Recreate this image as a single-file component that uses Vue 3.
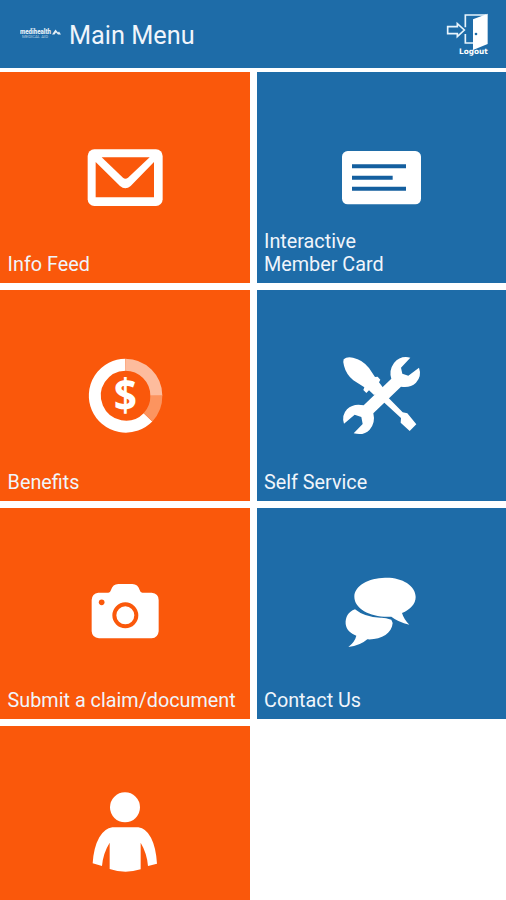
<template>
    <div class="screen">
        <header class="header">
            <svg class="logo" viewBox="0 0 42 14">
                <text class="logo-name" x="0" y="7" textLength="31" lengthAdjust="spacingAndGlyphs">medihealth</text>
                <text class="logo-sub" x="2" y="11.2" textLength="26" lengthAdjust="spacingAndGlyphs">MEDICAL AID</text>
                <path class="logo-mark" d="M32 7.5 L35.5 2.5 L38 5.5 L39 4.5 L41 7.5 H38 L36 5.5 L34.5 7.5 Z" />
            </svg>
            <h1>Main Menu</h1>
            <button class="logout" aria-label="Logout">
                <svg viewBox="45 30 132 138">
                    <path class="outline" d="M53 77 H82 V68 L103 87 L82 107 V98 H53 Z" />
                    <path class="outline" d="M106 79 V42 H168 M106 99 V126 H130" />
                    <path class="white" d="M129 55 L173 38 V129 L129 147 Z" />
                    <circle class="knob" cx="138" cy="99" r="4" />
                    <text class="logout-text" x="87" y="160" textLength="86" lengthAdjust="spacingAndGlyphs">Logout</text>
                </svg>
            </button>
        </header>

        <main class="menu">
            <button v-for="item in items" :key="item.id" class="tile" :class="item.color">
                <svg class="icon" :viewBox="item.box">
                    <g v-if="item.id === 'feed'">
                        <rect class="white" x="38" y="43" width="225" height="170" rx="20" />
                        <path class="hole" d="M80 67 H224 L159 128 Q151 134 144 128 Z" />
                        <path class="hole" d="M62 81 L135 153 Q151 167 167 153 L237 81 V187 H62 Z" />
                    </g>
                    <g v-else-if="item.id === 'card'">
                        <rect class="white" x="36" y="48" width="237" height="160" rx="17" />
                        <path class="card-lines" d="M66 94 H228 M66 128 H188 M66 161 H228" />
                    </g>
                    <g v-else-if="item.id === 'benefits'">
                        <path class="ring" d="M219 217 A93 93 0 1 1 151 59" />
                        <path class="ring soft" d="M151 59 A93 93 0 0 1 244 152" />
                        <path class="ring softer" d="M244 152 A93 93 0 0 1 219 217" />
                        <text class="dollar" x="151" y="183" text-anchor="middle">$</text>
                    </g>
                    <g v-else-if="item.id === 'service'">
                        <path class="white" d="M41 43 Q50 34 69 38 Q98 44 117 69 L135 96 L143 95 L151 104 L147 112 L166 137 L132 150 L117 136 L109 144 L100 135 L103 127 L70 106 Q48 87 42 62 Q38 51 41 43 Z" />
                        <path class="white" d="M155 166 L170 153 L218 202 L232 205 L259 238 L239 258 L212 233 L213 219 Z" />
                        <path class="white" d="M241 38 L213 68 L217 86 L235 92 L267 68 Q276 93 258 113 Q240 130 213 125 L130 205 Q137 234 119 254 Q101 273 71 265 L98 237 L94 216 L74 209 L42 236 Q34 211 51 193 Q70 174 101 181 L184 101 Q176 76 192 54 Q211 31 241 38 Z" />
                    </g>
                    <g v-else-if="item.id === 'claim'">
                        <path class="white" d="M70 68 H100 Q106 68 108 60 Q113 42 130 42 H172 Q189 42 194 60 Q196 68 202 68 H230 Q251 70 251 90 V184 Q249 204 230 205 H72 Q51 203 50 184 V90 Q51 70 70 68 Z" />
                        <circle class="lens" cx="151" cy="136" r="33" />
                        <circle class="hole" cx="80" cy="97" r="8.5" />
                    </g>
                    <g v-else-if="item.id === 'contact'">
                        <path class="white" d="M75 133 C54 140 46 158 47 177 C49 194 62 206 79 212 Q75 230 55 246 Q91 242 112 223 C153 225 186 205 188 174 L184 164 Q165 157 151 158 Q104 157 75 133 Z" />
                        <path class="white" d="M165 38 C213 36 257 60 257 96 C257 117 241 134 216 144 Q222 164 238 179 Q204 171 184 155 C125 159 73 132 73 95 C73 62 116 39 165 38 Z" />
                    </g>
                    <g v-else>
                        <circle class="white" cx="150" cy="82" r="45" />
                        <path class="white" d="M112 142 H190 Q213 145 228 173 Q243 202 246 251 L219 258 Q216 220 197 188 V268 Q150 283 104 267 V188 Q84 220 81 258 L53 250 Q56 202 73 172 Q89 145 112 142 Z" />
                    </g>
                </svg>
                <span class="label">{{ item.label }}</span>
            </button>
        </main>
    </div>
</template>

<script setup>
const items = [
    { id: 'feed', label: 'Info Feed', color: 'orange', box: '0 -18 300 300' },
    { id: 'card', label: 'Interactive\nMember Card', color: 'blue', box: '6 -18 300 300' },
    { id: 'benefits', label: 'Benefits', color: 'orange', box: '0 6 300 300' },
    { id: 'service', label: 'Self Service', color: 'blue', box: '6 6 300 300' },
    { id: 'claim', label: 'Submit a claim/document', color: 'orange', box: '0 -15 300 300' },
    { id: 'contact', label: 'Contact Us', color: 'blue', box: '6 0 300 300' },
    { id: 'profile', label: '', color: 'orange', box: '0 9 300 300' },
];
</script>

<style>
body {
    background: #fff;
    overflow: hidden;
}
</style>

<style scoped>
.screen {
    height: 900px;
    overflow: hidden;
    font-family: Roboto, sans-serif;
    color: #f0f5fb;
}

.header {
    display: flex;
    align-items: center;
    box-sizing: border-box;
    height: 68px;
    padding: 0 17px 0 20px;
    background: #1e6ca8;
}

.logo {
    width: 42px;
    height: 14px;
    margin-right: 7px;
    fill: #e4eef6;
}

.logo-name {
    font-size: 6.5px;
    font-weight: 900;
}

.logo-sub {
    font-size: 3px;
    opacity: 0.7;
}

h1 {
    margin: 3px 0 0;
    font-size: 25.3px;
    font-weight: 400;
    line-height: 30px;
}

button {
    border: 0;
    padding: 0;
    font: inherit;
    color: inherit;
    text-align: left;
    cursor: pointer;
}

.logout {
    width: 44px;
    height: 46px;
    margin-left: auto;
    background: none;

    svg {
        display: block;
        width: 44px;
        height: 46px;
    }
}

.outline {
    fill: none;
    stroke: #e8f4fc;
    stroke-width: 5;
}

.knob {
    fill: #1e6ca8;
}

.logout-text {
    font-family: "DejaVu Sans", sans-serif;
    font-size: 23px;
    font-weight: 700;
    fill: #fff;
}

.menu {
    display: grid;
    grid-template-columns: 250px 249px;
    grid-auto-rows: 211px;
    gap: 7px;
    margin-top: 4px;
}

.tile {
    display: flex;
    flex-direction: column;
    justify-content: space-between;
    box-sizing: border-box;
    padding: 57px 7px 7px;
}

.orange {
    background: #fa580b;
}

.orange .label {
    padding-left: 0.6px;
}

.blue {
    background: #1e6ca8;
}

.icon {
    flex: none;
    width: 100px;
    height: 100px;
    margin-left: 68px;
}

.label {
    /* two-line labels grow upwards over the icon's empty margin */
    margin-top: -20px;
    font-size: 19.8px;
    line-height: 23px;
    white-space: pre;
}

.white {
    fill: #fff;
}

.hole {
    fill: #fa580b;
}

.card-lines {
    fill: none;
    stroke: #145f9f;
    stroke-width: 12;
}

.ring {
    fill: none;
    stroke: #fff;
    stroke-width: 36;
}

.soft {
    stroke: #fdbc9d;
}

.softer {
    stroke: #fc945f;
}

.dollar {
    font-family: "Open Sans", sans-serif;
    font-size: 122px;
    font-weight: 700;
    fill: #fff;
    transform: scaleY(1.08);
}

.lens {
    fill: #fff;
    stroke: #fa580b;
    stroke-width: 12;
}
</style>
